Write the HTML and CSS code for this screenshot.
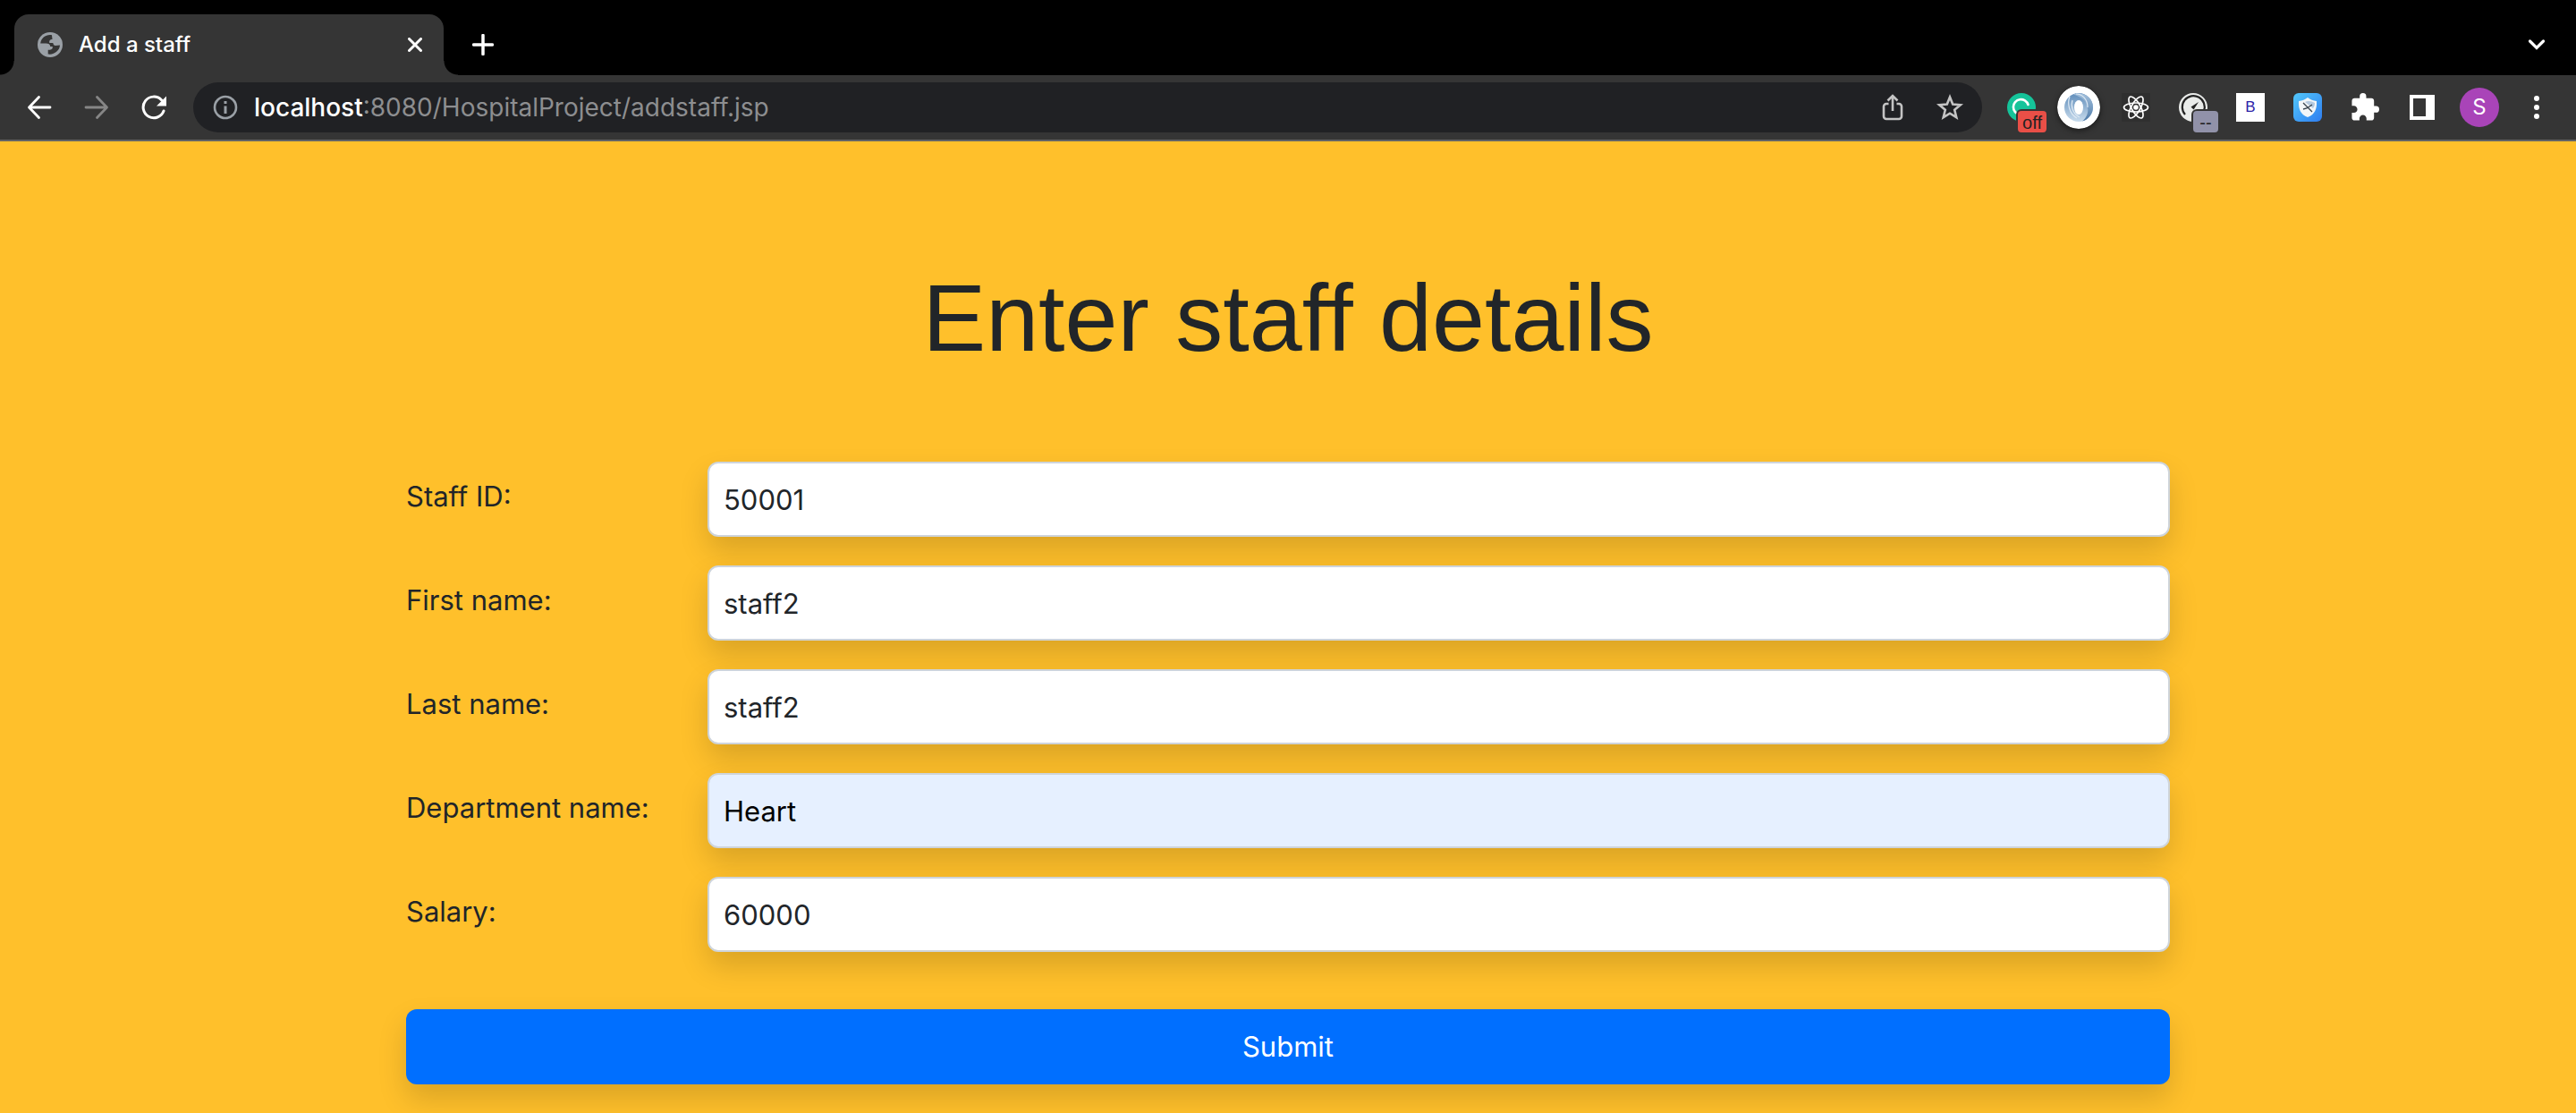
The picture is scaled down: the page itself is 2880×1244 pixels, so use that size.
FILE: index.html
```html
<!DOCTYPE html>
<html lang="en">
<head>
<meta charset="utf-8">
<title>Add a staff</title>
<link rel="stylesheet" href="styles.css">
</head>
<body>
<header class="browser">
  <div class="tabstrip">
    <div class="tab">
      <svg class="tab-icon" viewBox="0 0 28 28" aria-hidden="true"><circle cx="14" cy="14" r="14" fill="#9aa0a6"/><path d="M16 3.200C10 2 4 6 3.200 12.500h6c3 0 5 1 5 3.500h2.500c.5 2-.5 3.500-3 3.700h-2v4.800c7 1 13-4 13.300-10l-5 .5c-1.500 0-2.500-1-2.700-3h-4c-.5-3 1-4 3.200-4z" fill="#353535"/></svg>
      <span class="tab-title">Add a staff</span>
      <button class="plain" type="button" aria-label="Close tab"><svg width="16" height="16" viewBox="0 0 16 16"><path d="M1.500 1.500l13 13M14.500 1.500l-13 13" stroke="#fff" stroke-width="3" stroke-linecap="round"/></svg></button>
    </div>
    <button class="plain new-tab" type="button" aria-label="New tab"><svg width="24" height="24" viewBox="0 0 24 24"><path d="M12 1.500v21M1.500 12h21" stroke="#fff" stroke-width="3.500" stroke-linecap="round"/></svg></button>
    <button class="plain tool tab-search" type="button" aria-label="Search tabs"><svg width="20" height="14" viewBox="0 0 20 14"><path d="M2.500 3L10 10.500 17.500 3" stroke="#fff" stroke-width="3.200" stroke-linecap="round" fill="none"/></svg></button>
  </div>
  <div class="toolbar">
    <nav class="tools">
      <button class="plain tool" type="button" aria-label="Back"><svg width="28" height="28" viewBox="0 0 28 28"><path d="M26 14H3M13.500 2.500L2.500 14l11 11.500" stroke="#fff" stroke-width="2.800" stroke-linecap="round" stroke-linejoin="round" fill="none"/></svg></button>
      <button class="plain tool" type="button" aria-label="Forward"><svg width="28" height="28" viewBox="0 0 28 28"><path d="M2 14h23M14.500 2.500l11 11.500-11 11.500" stroke="#868686" stroke-width="2.800" stroke-linecap="round" stroke-linejoin="round" fill="none"/></svg></button>
      <button class="plain tool" type="button" aria-label="Reload"><svg width="28" height="28" viewBox="0 0 28 28"><path d="M25 18A11.800 11.800 0 1 1 22.500 5.800" stroke="#fff" stroke-width="3" fill="none" stroke-linecap="round"/><path d="M28 1.500v11H17z" fill="#fff"/></svg></button>
    </nav>
    <div class="address">
      <svg width="28" height="28" viewBox="0 0 28 28" aria-hidden="true"><circle cx="14" cy="14" r="12" fill="none" stroke="#9aa0a6" stroke-width="2.600"/><path d="M14 12.500v8.500M14 7v3" stroke="#9aa0a6" stroke-width="3"/></svg>
      <span class="url"><span class="host">localhost</span>:8080/HospitalProject/addstaff.jsp</span>
      <button class="plain tool" type="button" aria-label="Share"><svg width="24" height="32" viewBox="0 0 24 32"><path d="M7.500 12H5a3 3 0 0 0-3 3v11a3 3 0 0 0 3 3h14a3 3 0 0 0 3-3V15a3 3 0 0 0-3-3h-2.500M12 20V4M6.500 8.500L12 3l5.500 5.500" stroke="#c4c4c4" stroke-width="2.600" fill="none"/></svg></button>
      <button class="plain tool" type="button" aria-label="Bookmark"><svg width="32" height="32" viewBox="0 0 32 32"><path d="M16 4.500l3.200 8 8.600.7-6.600 5.600 2.100 8.400L16 22.700l-7.300 4.500 2.100-8.400-6.600-5.600 8.600-.7z" stroke="#c4c4c4" stroke-width="2.600" fill="none"/></svg></button>
    </div>
    <div class="tools">
      <button class="plain tool" type="button" aria-label="Grammar checker"><svg width="32" height="32" viewBox="0 0 32 32"><circle cx="16" cy="16" r="16" fill="#15c39a"/><path d="M23.500 13A8.500 8.500 0 1 0 14 24" stroke="#fff" stroke-width="2.600" fill="none" stroke-linecap="round"/></svg><span class="badge badge-off">off</span></button>
      <button class="plain tool" type="button" aria-label="JSON viewer"><svg class="json" width="48" height="48" viewBox="0 0 48 48"><defs><linearGradient id="ja" x1="0" y1="0" x2="0" y2="1"><stop offset="0" stop-color="#5f8cba"/><stop offset="1" stop-color="#c9dced"/></linearGradient><linearGradient id="jb" x1="0" y1="0" x2="0" y2="1"><stop offset="0" stop-color="#a3c0dc"/><stop offset="1" stop-color="#4d7aa8"/></linearGradient></defs><circle cx="24" cy="24" r="24" fill="#fff"/><circle cx="24" cy="24" r="16" fill="url(#ja)"/><path d="M18 9.500c10-4 22 3 22 14.500 0 7-5 14-12 15.500 5-4 7-10 6-15-1-7-6-12-16-15z" fill="url(#jb)"/><path d="M14 12c-3 7-1 19 8 24M21 9c7 0 13 6 13 15M17 16c-2 6 0 15 8 19" stroke="#dce8f3" stroke-width="1.200" fill="none"/><ellipse cx="24" cy="24" rx="5" ry="8" fill="#fff"/></svg></button>
      <button class="plain tool" type="button" aria-label="React tools"><svg width="32" height="32" viewBox="0 0 32 32"><path d="M0 0h32v32H0z" fill="#2f2f2f"/><g stroke="#fff" stroke-width="1.700" fill="none"><ellipse cx="16" cy="16" rx="13.500" ry="5"/><ellipse cx="16" cy="16" rx="13.500" ry="5" transform="rotate(60 16 16)"/><ellipse cx="16" cy="16" rx="13.500" ry="5" transform="rotate(120 16 16)"/></g><circle cx="16" cy="16" r="2.800" fill="#fff"/></svg></button>
      <button class="plain tool" type="button" aria-label="Page speed"><svg width="32" height="32" viewBox="0 0 32 32"><circle cx="16" cy="16" r="16" fill="#e9ebe9"/><path d="M7 24a12.500 12.500 0 1 1 21-4" stroke="#222" stroke-width="2.200" fill="none"/><path d="M22 10l-8.500 5.500 3 3z" fill="#222"/></svg><span class="badge badge-none">--</span></button>
      <button class="plain tool" type="button" aria-label="B extension"><span class="tile">B</span></button>
      <button class="plain tool" type="button" aria-label="Shield"><svg width="32" height="32" viewBox="0 0 32 32"><defs><linearGradient id="sh" x1="0" y1="0" x2="1" y2="1"><stop offset="0" stop-color="#52c8fb"/><stop offset="1" stop-color="#2f7df0"/></linearGradient></defs><rect width="32" height="32" rx="6" fill="url(#sh)"/><path d="M16 5c3 2.500 6 3.500 10 4 .5 9-2 15-10 18C8 24 5.500 18 6 9c4-.5 7-1.500 10-4z" fill="#f3f6f8"/><path d="M13 10c3-2 8-1 11 1 0 3-1 4-2 6z" fill="#b4c9df"/><path d="M11 11l10 10M11 18l4-1 6-4" stroke="#39434d" stroke-width="1.300" fill="none"/></svg></button>
      <button class="plain tool" type="button" aria-label="Extensions"><svg width="32" height="32" viewBox="1 1 22 22"><path d="M20.500 11H19V7c0-1.100-.9-2-2-2h-4V3.500a2.500 2.500 0 0 0-5 0V5H4c-1.100 0-2 .9-2 2v3.800h1.500c1.500 0 2.700 1.200 2.700 2.700S5 16.200 3.500 16.200H2V20c0 1.100.9 2 2 2h3.800v-1.500c0-1.500 1.200-2.700 2.700-2.700s2.700 1.200 2.700 2.700V22H17c1.100 0 2-.9 2-2v-4h1.500a2.500 2.500 0 0 0 0-5z" fill="#fff"/></svg></button>
      <button class="plain tool" type="button" aria-label="Side panel"><svg width="28" height="28" viewBox="0 0 28 28"><path d="M0 0h28v28H0zM4 4v20h14V4z" fill="#fff" fill-rule="evenodd"/></svg></button>
      <button class="plain tool" type="button" aria-label="Profile"><span class="avatar">S</span></button>
      <button class="plain tool" type="button" aria-label="Menu"><svg width="6" height="26" viewBox="0 0 6 26"><g fill="#fff"><circle cx="3" cy="3" r="3"/><circle cx="3" cy="13" r="3"/><circle cx="3" cy="23" r="3"/></g></svg></button>
    </div>
  </div>
</header>
<main class="page">
  <h1 class="title">Enter staff details</h1>
  <form class="form">
    <div class="row"><label for="staff-id">Staff ID:</label><input id="staff-id" type="text" value="50001"></div>
    <div class="row"><label for="first-name">First name:</label><input id="first-name" type="text" value="staff2"></div>
    <div class="row"><label for="last-name">Last name:</label><input id="last-name" type="text" value="staff2"></div>
    <div class="row"><label for="department">Department name:</label><input class="autofilled" id="department" type="text" value="Heart"></div>
    <div class="row"><label for="salary">Salary:</label><input id="salary" type="text" value="60000"></div>
    <button class="submit" type="submit">Submit</button>
  </form>
</main>
</body>
</html>
```
FILE: styles.css
```css
* { box-sizing: border-box; }

body {
  margin: 0;
  min-height: 100vh;
  background: #ffc02b;
  color: #212529;
  font: 31px/48px Inter, "Liberation Sans", sans-serif;
}

svg { display: block; flex: none; }

.plain {
  display: flex;
  align-items: center;
  justify-content: center;
  padding: 0;
  border: 0;
  background: none;
  font: inherit;
  color: inherit;
}

/* Browser chrome */
.browser {
  background: #353535;
  border-bottom: 2px solid #626364;
  color: #fff;
}

.tabstrip {
  display: flex;
  height: 84px;
  padding: 16px 12px 0 16px;
  background: #000;
}

.tab {
  position: relative;
  display: flex;
  align-items: center;
  gap: 18px;
  width: 480px;
  padding: 0 24px 0 26px;
  border-radius: 16px 16px 0 0;
  background: #353535;
}

/* Flared feet of the active tab */
.tab::before,
.tab::after {
  content: "";
  position: absolute;
  bottom: 0;
  width: 16px;
  height: 16px;
}
.tab::before {
  right: 100%;
  background: radial-gradient(circle at 0 0, #000 15px, #353535 16px);
}
.tab::after {
  left: 100%;
  background: radial-gradient(circle at 100% 0, #000 15px, #353535 16px);
}

.tab-icon { width: 28px; height: 28px; }

.tab-title {
  flex: 1;
  font-size: 24px;
  font-weight: 500;
}

.new-tab { width: 88px; }
.tab-search { margin-left: auto; }

.toolbar {
  display: flex;
  align-items: center;
  gap: 12px;
  height: 72px;
  padding: 0 12px;
}

.tools { display: flex; }

.tool {
  position: relative;
  width: 64px;
  height: 68px;
}

.address {
  display: flex;
  flex: 1;
  align-items: center;
  height: 56px;
  padding: 0 4px 0 22px;
  border-radius: 28px;
  background: #202124;
}

.url {
  flex: 1;
  padding-left: 18px;
  color: #8d8e90;
  font-size: 28px;
}

.host {
  color: #fff;
  font-weight: 500;
}

.badge {
  position: absolute;
  left: 28px;
  bottom: 6px;
  height: 24px;
  border-radius: 4px;
  box-shadow: 0 0 0 2px #353535;
  color: #222;
  font-family: "Liberation Sans", sans-serif;
  font-size: 20px;
  line-height: 26px;
}
.badge-off { width: 32px; background: #e94f47; }
.badge-none { left: 32px; width: 28px; background: #9192a9; }

.json {
  border-radius: 50%;
  box-shadow: 0 2px 6px rgba(0, 0, 0, .5);
}

.tile {
  width: 32px;
  background: #fff;
  color: #2d22a8;
  font-family: "Liberation Sans", sans-serif;
  font-size: 17px;
  line-height: 32px;
}

.avatar {
  width: 44px;
  border-radius: 50%;
  background: #a944b8;
  font-size: 24px;
  line-height: 44px;
}

/* Page */
.page {
  width: 90%;
  max-width: 1972px;
  margin: 0 auto;
  padding: 130px 0 32px;
}

.title {
  margin: 0 0 94px;
  font-family: "Liberation Sans", Arial, sans-serif;
  font-size: 106px;
  font-weight: 400;
  line-height: 134px;
  text-align: center;
}

.form {
  display: flex;
  flex-direction: column;
  gap: 32px;
}

.row {
  display: grid;
  grid-template-columns: 337px 1fr;
}

.row label { padding-top: 15px; }

.row input {
  width: 100%;
  height: 84px;
  padding: 0 16px;
  border: 2px solid #ced4da;
  border-radius: 12px;
  background: #fff;
  box-shadow: 0 16px 32px rgba(0, 0, 0, .15);
  color: #212529;
  font: inherit;
}

.row .autofilled {
  background: #e6f0ff;
  color: #000;
}

.submit {
  height: 84px;
  margin-top: 32px;
  border: 0;
  border-radius: 12px;
  background: #006fff;
  box-shadow: 0 16px 32px rgba(0, 0, 0, .15);
  color: #fff;
  font: inherit;
}
```
